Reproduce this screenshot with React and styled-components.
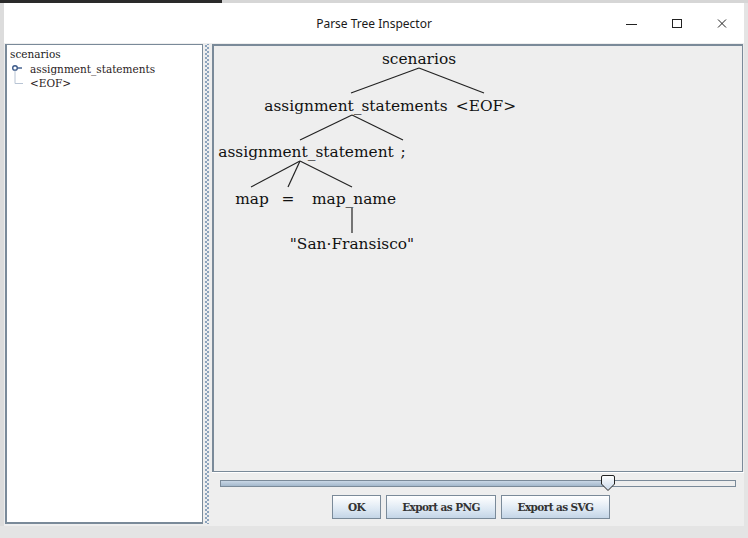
import React from 'react'
import styled, {createGlobalStyle} from 'styled-components'

const Global = createGlobalStyle`
  html, body { margin: 0; padding: 0; }
  body { background: #e4e4e4; width: 748px; height: 538px; overflow: hidden; }
`

const nodes = [
  {label: 'scenarios', x: 419, y: 63},
  {label: 'assignment_statements', x: 356, y: 110},
  {label: '<EOF>', x: 486, y: 110},
  {label: 'assignment_statement', x: 306, y: 156},
  {label: ';', x: 403, y: 156},
  {label: 'map', x: 252, y: 203},
  {label: '=', x: 288, y: 203},
  {label: 'map_name', x: 354, y: 203},
  {label: '"San\u00b7Fransisco"', x: 352, y: 248},
]

const edges = [
  [419, 67, 351, 92], [419, 67, 484, 92],
  [352, 114, 300, 139], [352, 114, 403, 139],
  [300, 160, 251, 186], [300, 160, 288, 186], [300, 160, 352, 186],
  [352, 207, 352, 232],
]

const thumbAt = (608 - 222) / (735 - 222) * 100

export default function App() {
  return (
    <Screen>
      <Global />
      <TopStrip>
        <DarkBar />
      </TopStrip>
      <Row>
        <Backdrop />
        <Window>
          <TitleBar>
            <Title>Parse Tree Inspector</Title>
            <Controls>
              <Ctrl>
                <svg width="12" height="12" viewBox="0 0 12 12">
                  <line x1="0" y1="6.5" x2="11" y2="6.5" stroke="#222" strokeWidth="1" />
                </svg>
              </Ctrl>
              <Ctrl>
                <svg width="12" height="12" viewBox="0 0 12 12">
                  <rect x="1.5" y="1.5" width="9" height="8" fill="none" stroke="#222" strokeWidth="1" />
                </svg>
              </Ctrl>
              <Ctrl>
                <svg width="12" height="12" viewBox="0 0 12 12">
                  <path d="M2 1.5 L10 9.5 M10 1.5 L2 9.5" stroke="#222" strokeWidth="1" />
                </svg>
              </Ctrl>
            </Controls>
          </TitleBar>
          <Body>
            <TreePanel>
              <TreeRow>scenarios</TreeRow>
              <TreeChild>
                <Handle>
                  <svg width="18" height="14" viewBox="0 0 18 14">
                    <circle cx="4" cy="6" r="2.3" fill="none" stroke="#3c5a8a" strokeWidth="1.4" />
                    <line x1="6.3" y1="6" x2="11" y2="6" stroke="#3c5a8a" strokeWidth="1.4" />
                    <line x1="4" y1="8.5" x2="4" y2="14" stroke="#b8c4d4" strokeWidth="1" />
                  </svg>
                </Handle>
                assignment_statements
              </TreeChild>
              <TreeChild>
                <Handle>
                  <svg width="18" height="14" viewBox="0 0 18 14">
                    <line x1="4" y1="0" x2="4" y2="7.5" stroke="#b8c4d4" strokeWidth="1" />
                    <line x1="4" y1="7.5" x2="12" y2="7.5" stroke="#b8c4d4" strokeWidth="1" />
                  </svg>
                </Handle>
                &lt;EOF&gt;
              </TreeChild>
            </TreePanel>
            <Splitter />
            <RightPanel>
              <Canvas>
                <svg width="528" height="426" viewBox="214 45 528 426">
                  {edges.map(([x1, y1, x2, y2], i) => (
                    <line key={i} x1={x1} y1={y1} x2={x2} y2={y2} stroke="#222" strokeWidth="1.2" />
                  ))}
                  {nodes.map((n, i) => (
                    <NodeText key={i} x={n.x} y={n.y} textAnchor="middle">{n.label}</NodeText>
                  ))}
                </svg>
              </Canvas>
              <SliderRow>
                <Track>
                  <Fill style={{width: `${thumbAt}%`}} />
                  <Thumb style={{left: `calc(${thumbAt}% - 8px)`}}>
                    <svg width="16" height="17" viewBox="0 0 16 17">
                      <defs>
                        <linearGradient id="tg" x1="0" y1="0" x2="0" y2="1">
                          <stop offset="0" stopColor="#ffffff" />
                          <stop offset="1" stopColor="#c8d8ea" />
                        </linearGradient>
                      </defs>
                      <path d="M1.5 2 Q1.5 0.5 3 0.5 L13 0.5 Q14.5 0.5 14.5 2 L14.5 9 L8 15.5 L1.5 9 Z" fill="url(#tg)" stroke="#222" strokeWidth="1" />
                    </svg>
                  </Thumb>
                </Track>
              </SliderRow>
              <ButtonRow>
                <Btn $w={49}>OK</Btn>
                <Btn $w={110}>Export as PNG</Btn>
                <Btn $w={109}>Export as SVG</Btn>
              </ButtonRow>
            </RightPanel>
          </Body>
        </Window>
        <Backdrop $right />
      </Row>
    </Screen>
  )
}

const Screen = styled.div`
  width: 748px;
  height: 538px;
  display: flex;
  flex-direction: column;
  background: #e4e4e4;
`

const TopStrip = styled.div`
  height: 3px;
  background: #d6d6d6;
  display: flex;
`

const DarkBar = styled.div`
  width: 222px;
  background: #2a2a2a;
`

const Row = styled.div`
  display: flex;
  height: 523px;
`

const Backdrop = styled.div`
  width: 4px;
  background: ${p => p.$right ? '#e4e4e4' : '#dcdcdc'};
`

const Window = styled.div`
  width: 740px;
  display: flex;
  flex-direction: column;
  background: #eeeeee;
`

const TitleBar = styled.div`
  height: 40px;
  background: #ffffff;
  position: relative;
  display: flex;
  align-items: center;
  justify-content: center;
  font-family: "Noto Sans", "Open Sans", sans-serif;
  font-size: 12px;
  color: #1a1a1a;
`

const Title = styled.div`
  padding-left: 0;
`

const Controls = styled.div`
  position: absolute;
  right: 0;
  top: 0;
  height: 40px;
  display: flex;
`

const Ctrl = styled.div`
  width: 45px;
  display: flex;
  align-items: center;
  justify-content: center;
  padding-top: 2px;
`

const Body = styled.div`
  flex: 1;
  display: flex;
  padding: 1px 0 2px 1px;
  background: #eeeeee;
`

const TreePanel = styled.div`
  width: 199px;
  box-sizing: border-box;
  background: #ffffff;
  border: 1px solid #7a8a99;
  border-left-width: 2px;
  border-bottom-width: 2px;
  padding: 2px 0 0 3px;
  font-family: "DejaVu Serif", serif;
  font-size: 10.5px;
  color: #222;
`

const TreeRow = styled.div`
  height: 15px;
  line-height: 15px;
`

const TreeChild = styled.div`
  height: 14px;
  line-height: 14px;
  display: flex;
  align-items: center;
  padding-left: 1px;
  color: #2a2222;
`

const Handle = styled.span`
  width: 18px;
  height: 14px;
  display: inline-flex;
  margin-right: 1px;
`

const Splitter = styled.div`
  width: 9px;
  background-color: #eeeeee;
  background-image:
    radial-gradient(circle, #8aa2bc 0.7px, transparent 0.9px),
    radial-gradient(circle, #8aa2bc 0.7px, transparent 0.9px);
  background-size: 4px 4px, 4px 4px;
  background-position: 1px 0, 3px 2px;
  background-repeat: repeat-y, repeat-y;
`

const RightPanel = styled.div`
  flex: 1;
  display: flex;
  flex-direction: column;
`

const Canvas = styled.div`
  height: 428px;
  margin-right: 1px;
  border-top: 2px solid #7a8a99;
  border-left: 2px solid #7a8a99;
  border-right: 1px solid #7a8a99;
  border-bottom: 1px solid #7a8a99;
  box-sizing: border-box;
  background: #eeeeee;
  overflow: hidden;
  svg { display: block; }
`

const NodeText = styled.text`
  font-family: "DejaVu Serif", serif;
  font-size: 15.4px;
  fill: #111;
`

const SliderRow = styled.div`
  height: 21px;
  display: flex;
  align-items: center;
  padding: 0 8px 0 8px;
  border-top: 1px solid #ffffff;
`

const Track = styled.div`
  flex: 1;
  height: 5px;
  position: relative;
  border: 1px solid #7a8a99;
  background: #eeeeee;
`

const Fill = styled.div`
  height: 100%;
  background: linear-gradient(#c9d7e6, #a3b8cc);
`

const Thumb = styled.div`
  position: absolute;
  top: -6px;
  width: 16px;
  height: 17px;
`

const ButtonRow = styled.div`
  display: flex;
  justify-content: center;
  gap: 5px;
  padding: 1px 14px 0 0;
  height: 24px;
`

const Btn = styled.button`
  width: ${p => p.$w}px;
  height: 24px;
  border: 1px solid #7a8a99;
  background: linear-gradient(#ffffff, #dde8f3 60%, #c4d5e6);
  font-family: "DejaVu Serif", serif;
  font-weight: bold;
  font-size: 10.5px;
  color: #333;
  padding: 0;
  letter-spacing: -0.6px;
`
